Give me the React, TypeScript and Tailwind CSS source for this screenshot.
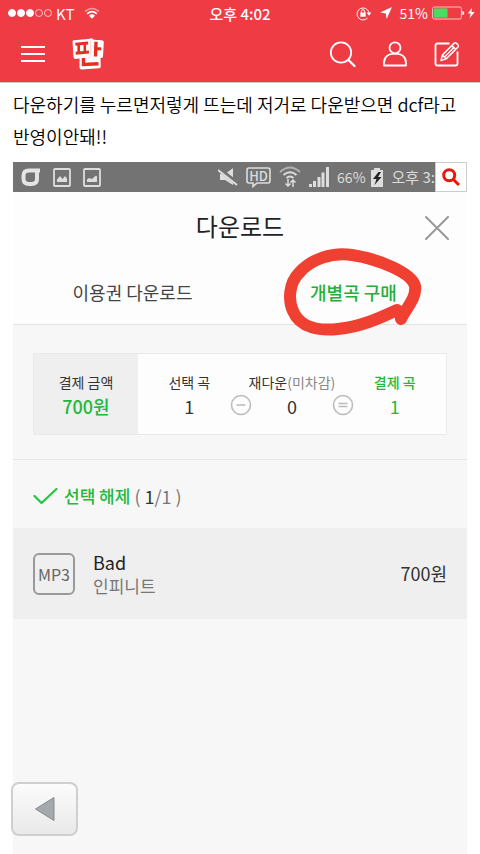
import React from "react";

function StatusBar() {
  return (
    <div className="grid h-[26px] grid-cols-[1fr_auto_1fr] items-center px-2 text-[15px] leading-none">
      <div className="flex items-center gap-1">
        <svg className="h-[10px] w-[44px]" viewBox="0 0 44 10" fill="#fff" stroke="#fff" aria-hidden="true">
          <circle cx="4" cy="5" r="3.500" />
          <circle cx="13" cy="5" r="3.500" />
          <circle cx="22" cy="5" r="3.500" />
          <circle cx="31" cy="5" r="3.500" fill="none" strokeWidth="0.700" />
          <circle cx="40" cy="5" r="3.500" fill="none" strokeWidth="0.700" />
        </svg>
        <span className="w-6">KT</span>
        <svg className="h-3 w-4" viewBox="0 0 16 12" fill="none" stroke="#fff" aria-hidden="true">
          <path d="M1 4.500Q8-1.500 15 4.500" strokeWidth="1.600" opacity="0.500" />
          <path d="M3.200 6.800Q8 2.500 12.800 6.800" strokeWidth="1.800" />
          <path d="M5 8.700Q8 6 11 8.700L8 11.700Z" fill="#fff" stroke="none" />
        </svg>
      </div>
      <time className="font-medium">오후 4:02</time>
      <div className="-mr-1 flex items-center justify-end">
        <svg className="mr-2 h-[15px] w-4" viewBox="0 0 16 15" fill="none" stroke="#fff" aria-hidden="true">
          <path d="M11.500 12A6 6 0 1 1 12.900 6.500" />
          <path d="M10.600 6.500H15.400L13 9.800Z" fill="#fff" stroke="none" />
          <rect x="4.300" y="6.500" width="5.400" height="4.200" fill="#fff" stroke="none" />
          <path d="M5.400 7V5.300A1.600 1.600 0 0 1 8.600 5.300V7" />
        </svg>
        <svg className="mr-2 h-3 w-3" viewBox="0 0 12 12" fill="#fff" aria-hidden="true">
          <path d="M12 0L6.600 12L5.800 6.400L0 5.400Z" />
        </svg>
        <span className="mr-1 text-[14px]">51%</span>
        <svg className="h-[14px] w-[44px]" viewBox="0 0 44 14" aria-hidden="true">
          <rect x="0.600" y="1" width="28.800" height="12" rx="1.800" fill="none" stroke="#fff" strokeOpacity="0.700" />
          <rect x="2" y="2.400" width="13.500" height="9.200" fill="#4cd964" />
          <path d="M30.300 5Q32.300 5.200 32.300 7T30.300 9Z" fill="#fff" />
          <path d="M40.200 1.500L35.800 7.600H38.800L37.400 12.600L42.700 6H39.400Z" fill="#fff" />
        </svg>
      </div>
    </div>
  );
}

function PannLogo() {
  return (
    <svg className="h-8 w-8" viewBox="0 0 32 32" aria-hidden="true">
      <path
        d="M.5 3.500Q.5 2.300 2 2.200L16 1L20 .2L21.800 1.700L30 2.300Q32 2.600 31.800 4.500L31 18.500Q31 20 28.500 20L28.800 28.500Q28.800 30 27 30.200L9.500 31.500Q7.500 31.500 7.500 29.500V20.500L3.500 21Q1.700 21 1.500 19Z"
        fill="#fff"
      />
      <g fill="none" stroke="#e42f22" strokeWidth="3">
        <path d="M3.300 6.200L16.200 5" />
        <path d="M6.700 6.800V14M12.800 6.200V13.500" strokeWidth="2.600" />
        <path d="M3.700 15.300L17 14" />
        <path d="M24 3.800L23.500 18.500" strokeWidth="3.400" />
        <path d="M24 10.800H29.300" />
        <path d="M11.500 20V26.500L26.500 25.800" strokeWidth="3.400" />
      </g>
      <path d="M18.500 2.500L18.900 17L16.500 20.500" fill="none" stroke="#f6c4c1" strokeWidth="0.700" />
    </svg>
  );
}

function AppHeader() {
  return (
    <header className="border-b border-[#c9c9c9] bg-[#ef3b43] text-white">
      <StatusBar />
      <nav className="flex h-14 items-center pr-[19px] pl-5">
        <button type="button" aria-label="메뉴" className="mr-[26px]">
          <svg className="h-5 w-[26px]" viewBox="0 0 26 20" stroke="#fff" strokeWidth="2" aria-hidden="true">
            <path d="M1 3H25M1 10H25M1 17H25" />
          </svg>
        </button>
        <a href="#home" aria-label="판">
          <PannLogo />
        </a>
        <div className="ml-auto flex gap-6">
          <button type="button" aria-label="검색">
            <svg className="h-7 w-7" viewBox="0 0 28 28" fill="none" stroke="#fff" strokeWidth="1.800" strokeLinecap="round" aria-hidden="true">
              <circle cx="12" cy="12.500" r="10.200" />
              <path d="M19.500 20L25.500 26" strokeWidth="2.300" />
            </svg>
          </button>
          <button type="button" aria-label="내 정보">
            <svg className="h-7 w-7" viewBox="0 0 28 28" fill="none" stroke="#fff" strokeWidth="1.800" strokeLinejoin="round" aria-hidden="true">
              <circle cx="14" cy="7.800" r="5.500" />
              <path d="M3 25.500V23C3 17 7.500 13.800 11.500 13.800H16.500C20.500 13.800 25 17 25 23V25.500Z" />
            </svg>
          </button>
          <button type="button" aria-label="글쓰기">
            <svg className="h-7 w-7" viewBox="0 0 28 28" fill="none" stroke="#fff" strokeWidth="1.800" strokeLinejoin="round" aria-hidden="true">
              <path d="M16.500 3.500H4.500Q2.500 3.500 2.500 5.500V23.500Q2.500 25.500 4.500 25.500H22.500Q24.500 25.500 24.500 23.500V11.500" />
              <path d="M8 20.500L9.400 15L21 3.400Q22.300 2.200 23.700 3.500L24.900 4.700Q26 6 24.800 7.300L13.200 18.900ZM18.800 5.600L22.600 9.400M9.400 15L13.200 18.900M11.500 17L20.500 8" strokeWidth="1.500" />
            </svg>
          </button>
        </div>
      </nav>
    </header>
  );
}

function PictureIcon({ hill }: { hill: string }) {
  return (
    <svg className="h-[19px] w-[18px]" viewBox="0 0 18 19" fill="none" stroke="#ddd" strokeWidth="1.800" aria-hidden="true">
      <rect x="1" y="1" width="16" height="17" rx="1" />
      <path d={hill} fill="#ddd" stroke="none" />
    </svg>
  );
}

function PhoneBar() {
  return (
    <div className="flex h-[30px] items-center bg-[#737373] text-[15px] leading-none text-[#ddd]">
      <div className="flex items-center gap-3 pl-2">
        <svg className="h-5 w-5" viewBox="0 0 20 20" fill="none" stroke="#e4e4e4" strokeWidth="4" aria-hidden="true">
          <path d="M19 3.500H8Q2.500 3.500 2.500 8.500V12Q2.500 17 8 17H10.500Q16 17 16 12V4" />
        </svg>
        <PictureIcon hill="M4 14V11.500L7 8L9.500 11L12 8L14 10.500V14Z" />
        <PictureIcon hill="M4 14V11.500L6 10L9 11L13 7.500L14 8.500V14Z" />
      </div>
      <div className="ml-auto flex flex-none items-center">
        <svg className="mr-2 h-5 w-5" viewBox="0 0 20 20" fill="#ddd" aria-hidden="true">
          <path d="M2 7H7L15 1V18L7 13H2Z" />
          <path d="M1 2L20 17" stroke="#737373" strokeWidth="4.500" />
          <path d="M0 3L19 18" stroke="#ddd" strokeWidth="2" />
        </svg>
        <div className="relative mr-2 flex h-5 w-[25px] justify-center pt-[2px] text-[13px] leading-none">
          <svg className="absolute inset-0 h-[21px] w-[25px]" viewBox="0 0 25 21" fill="none" stroke="#ddd" strokeWidth="1.600" aria-hidden="true">
            <path d="M3 1H22Q24 1 24 3V14Q24 16 22 16H11L7 19.500V16H3Q1 16 1 14V3Q1 1 3 1Z" />
          </svg>
          <span className="font-medium">HD</span>
        </div>
        <svg className="mr-2 h-[22px] w-[22px]" viewBox="0 0 22 22" fill="none" stroke="#ddd" strokeWidth="2" aria-hidden="true">
          <path d="M1 6Q11-3 21 6" opacity="0.600" />
          <path d="M4.500 9Q11 3.500 17.500 9M7.500 12Q11 9 14.500 12" />
          <path d="M9 13V20M6.500 17.500L9 20L11.500 17.500M14 21V14M11.500 16.500L14 14L16.500 16.500" strokeWidth="1.500" />
        </svg>
        <svg className="mr-2 h-5 w-5" viewBox="0 0 20 20" fill="#ddd" aria-hidden="true">
          <path d="M0 17H3V20H0ZM4 14H7V20H4ZM8.500 10H11.500V20H8.500ZM12.500 5.500H15.500V20H12.500ZM17 0H20V20H17Z" />
        </svg>
        <span className="mr-1 text-[14px]">66%</span>
        <svg className="mr-2 h-5 w-[14px]" viewBox="0 0 14 20" aria-hidden="true">
          <path d="M4 1H10V3H13V20H1V3H4Z" fill="#ddd" />
          <path d="M8.500 5L3 12H6.500L4.500 18L11.500 10H8L11 5Z" fill="#222" />
        </svg>
        <span className="text-[15px] leading-5 whitespace-nowrap">오후 3:</span>
      </div>
      <button type="button" aria-label="사진 확대" className="flex h-[30px] w-8 flex-none items-center justify-center border border-[#ccc] bg-white">
        <svg className="h-[18px] w-[18px]" viewBox="0 0 18 18" fill="none" stroke="#e8190c" strokeWidth="3" aria-hidden="true">
          <circle cx="7.200" cy="7.200" r="5.500" />
          <path d="M11 11L17 17" />
        </svg>
      </button>
    </div>
  );
}

function Tabs() {
  return (
    <div role="tablist" className="grid h-[65px] grid-cols-2 border-b border-[#e2e2e2] text-[18px]">
      <button type="button" role="tab" aria-selected="false" className="pl-3 text-[#444]">
        이용권 다운로드
      </button>
      <button type="button" role="tab" aria-selected="true" className="relative font-medium text-[#22b03a]">
        개별곡 구매
        <svg className="absolute -top-4 left-1/2 z-10 h-24 w-36 -translate-x-1/2" viewBox="2 0 144 96" fill="none" stroke="#f04032" strokeWidth="12" strokeLinecap="round" strokeLinejoin="round" aria-hidden="true">
          <path d="M121 75C126 64 137 54 135 42C132 29 99 15 72 11C52 8 31 15 19 29C9 39 8 56 13 67C20 84 40 87 58 85C80 83 100 74 117 66" />
        </svg>
      </button>
    </div>
  );
}

function Operator({ sign }: { sign: "minus" | "equals" }) {
  return (
    <svg className="absolute top-10 -right-[11px] z-10 h-[22px] w-[22px]" viewBox="0 0 22 22" fill="none" stroke="#bdbdbd" strokeWidth="1.600" aria-hidden="true">
      <circle cx="11" cy="11" r="9.500" />
      <path d={sign === "minus" ? "M6.500 11H15.500" : "M6.500 9.500H15.500M6.500 12.500H15.500"} />
    </svg>
  );
}

const cell = "relative flex flex-col items-center justify-center whitespace-nowrap text-[18px] leading-6";
const label = "text-[14px] leading-6";

function Summary() {
  return (
    <section className="border-b border-[#e9e9e9] px-5 pt-7 pb-6">
      <dl className="flex h-[82px] border border-[#e9e9e9] bg-[#fdfdfd] text-[#333]">
        <div className={`${cell} w-[104px] flex-none bg-[#efefef]`}>
          <dt className={label}>결제 금액</dt>
          <dd className="font-medium text-[#22b83c]">700원</dd>
        </div>
        <div className="grid flex-1 grid-cols-3">
          <div className={cell}>
            <dt className={label}>선택 곡</dt>
            <dd>1</dd>
            <Operator sign="minus" />
          </div>
          <div className={cell}>
            <dt className={label}>
              재다운<span className="text-[#888]">(미차감)</span>
            </dt>
            <dd>0</dd>
            <Operator sign="equals" />
          </div>
          <div className={`${cell} text-[#22b83c]`}>
            <dt className={`${label} font-medium`}>결제 곡</dt>
            <dd>1</dd>
          </div>
        </div>
      </dl>
    </section>
  );
}

function DownloadScreen() {
  return (
    <div className="flex flex-1 flex-col bg-[#f7f7f7]">
      <PhoneBar />
      <div className="bg-[#fdfdfd]">
        <div className="grid h-[68px] grid-cols-[1fr_auto_1fr] items-center px-[18px]">
          <h1 className="col-start-2 text-[24px] leading-8 text-[#222]">다운로드</h1>
          <button type="button" aria-label="닫기" className="justify-self-end pt-1">
            <svg className="h-6 w-6" viewBox="0 0 24 24" stroke="#999" strokeWidth="2" strokeLinecap="round" aria-hidden="true">
              <path d="M1 1L23 23M23 1L1 23" />
            </svg>
          </button>
        </div>
        <Tabs />
      </div>
      <Summary />
      <div className="flex h-[68px] items-center gap-1 px-5 pt-1 text-[17px]">
        <button type="button" className="flex items-center gap-[6px] font-medium text-[#22b83c]">
          <svg className="h-[18px] w-[25px]" viewBox="0 0 25 18" fill="none" stroke="#22c53e" strokeWidth="2.200" strokeLinecap="round" strokeLinejoin="round" aria-hidden="true">
            <path d="M1.500 9L8.500 16L23.500 2" />
          </svg>
          선택 해제
        </button>
        <span className="text-[18px] text-[#777]">
          ( <span className="text-[#333]">1</span>/1 )
        </span>
      </div>
      <ul>
        <li className="flex h-[91px] items-center bg-[#efefef] px-5">
          <span className="flex h-[42px] w-[42px] items-center justify-center rounded-md border-2 border-[#999] text-[16px] text-[#666]">
            MP3
          </span>
          <div className="ml-[18px] leading-6">
            <p className="text-[18px] text-[#222]">Bad</p>
            <p className="text-[17px] text-[#777]">인피니트</p>
          </div>
          <span className="ml-auto text-[18px] text-[#333]">700원</span>
        </li>
      </ul>
    </div>
  );
}

export default function App() {
  return (
    <div className="flex min-h-screen flex-col bg-white font-['Noto_Sans_CJK_KR',sans-serif]">
      <AppHeader />
      <main className="flex flex-1 flex-col px-[13px] pt-[5px]">
        <p className="pb-[10px] text-[18px] leading-8 font-[350] text-black">
          다운하기를 누르면저렇게 뜨는데 저거로 다운받으면 dcf라고 반영이안돼!!
        </p>
        <DownloadScreen />
      </main>
      <button
        type="button"
        aria-label="뒤로"
        className="fixed bottom-[18px] left-[11px] z-20 flex h-[54px] w-[67px] items-center justify-center rounded-lg border-2 border-[#cfcfcf] bg-linear-to-b from-[#fcfcfc] to-[#e9e9e9]"
      >
        <svg className="h-[26px] w-[22px]" viewBox="0 0 22 26" fill="#a5a9ad" stroke="#85898c" aria-hidden="true">
          <path d="M20 1.500V24.500L1.500 13Z" />
        </svg>
      </button>
    </div>
  );
}
